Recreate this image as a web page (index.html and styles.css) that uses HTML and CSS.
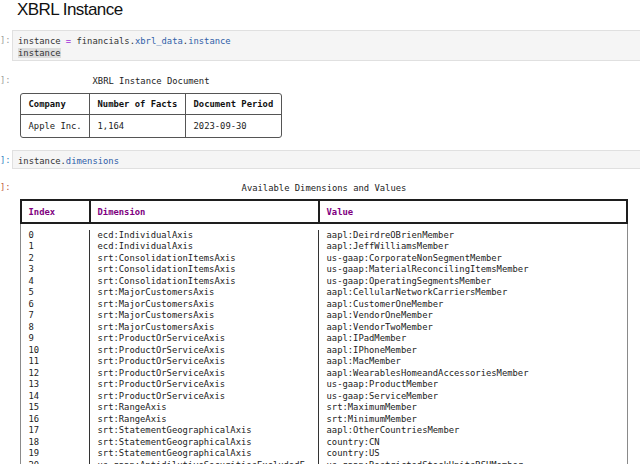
FILE: index.html
```html
<!DOCTYPE html>
<html>
<head>
<meta charset="utf-8">
<link rel="stylesheet" href="styles.css">
</head>
<body>
<h1 class="title">XBRL Instance</h1>

<div class="cell in-cell first">
  <div class="prompt dim">]:</div>
  <div class="code">
    <div class="line">instance <span class="op">=</span> financials.<span class="prop">xbrl_data</span>.<span class="prop">instance</span></div>
    <div class="line"><span class="sel">instance</span></div>
  </div>
</div>

<div class="cell out-cell out1">
  <div class="prompt dim">]:</div>
  <div class="out">
    <div class="rt rt1">
      <div class="caption">XBRL Instance Document</div>
      <div class="tbl1">
        <div class="c h">Company</div>
        <div class="c h b">Number of Facts</div>
        <div class="c h b">Document Period</div>
        <div class="c">Apple Inc.</div>
        <div class="c b">1,164</div>
        <div class="c b">2023-09-30</div>
      </div>
    </div>
  </div>
</div>

<div class="cell in-cell second">
  <div class="prompt blue">]:</div>
  <div class="code">
    <div class="line">instance.<span class="prop">dimensions</span></div>
  </div>
</div>

<div class="cell out-cell out2">
  <div class="prompt red">]:</div>
  <div class="out">
    <div class="rt rt2">
      <div class="caption">Available Dimensions and Values</div>
      <div class="thead">
        <div class="hc">Index</div>
        <div class="hc hb">Dimension</div>
        <div class="hc hb">Value</div>
      </div>
      <div class="tbody">
        <div class="bc">0</div><div class="bc bb">ecd:IndividualAxis</div><div class="bc bb">aapl:DeirdreOBrienMember</div>
        <div class="bc">1</div><div class="bc bb">ecd:IndividualAxis</div><div class="bc bb">aapl:JeffWilliamsMember</div>
        <div class="bc">2</div><div class="bc bb">srt:ConsolidationItemsAxis</div><div class="bc bb">us-gaap:CorporateNonSegmentMember</div>
        <div class="bc">3</div><div class="bc bb">srt:ConsolidationItemsAxis</div><div class="bc bb">us-gaap:MaterialReconcilingItemsMember</div>
        <div class="bc">4</div><div class="bc bb">srt:ConsolidationItemsAxis</div><div class="bc bb">us-gaap:OperatingSegmentsMember</div>
        <div class="bc">5</div><div class="bc bb">srt:MajorCustomersAxis</div><div class="bc bb">aapl:CellularNetworkCarriersMember</div>
        <div class="bc">6</div><div class="bc bb">srt:MajorCustomersAxis</div><div class="bc bb">aapl:CustomerOneMember</div>
        <div class="bc">7</div><div class="bc bb">srt:MajorCustomersAxis</div><div class="bc bb">aapl:VendorOneMember</div>
        <div class="bc">8</div><div class="bc bb">srt:MajorCustomersAxis</div><div class="bc bb">aapl:VendorTwoMember</div>
        <div class="bc">9</div><div class="bc bb">srt:ProductOrServiceAxis</div><div class="bc bb">aapl:IPadMember</div>
        <div class="bc">10</div><div class="bc bb">srt:ProductOrServiceAxis</div><div class="bc bb">aapl:IPhoneMember</div>
        <div class="bc">11</div><div class="bc bb">srt:ProductOrServiceAxis</div><div class="bc bb">aapl:MacMember</div>
        <div class="bc">12</div><div class="bc bb">srt:ProductOrServiceAxis</div><div class="bc bb">aapl:WearablesHomeandAccessoriesMember</div>
        <div class="bc">13</div><div class="bc bb">srt:ProductOrServiceAxis</div><div class="bc bb">us-gaap:ProductMember</div>
        <div class="bc">14</div><div class="bc bb">srt:ProductOrServiceAxis</div><div class="bc bb">us-gaap:ServiceMember</div>
        <div class="bc">15</div><div class="bc bb">srt:RangeAxis</div><div class="bc bb">srt:MaximumMember</div>
        <div class="bc">16</div><div class="bc bb">srt:RangeAxis</div><div class="bc bb">srt:MinimumMember</div>
        <div class="bc">17</div><div class="bc bb">srt:StatementGeographicalAxis</div><div class="bc bb">aapl:OtherCountriesMember</div>
        <div class="bc">18</div><div class="bc bb">srt:StatementGeographicalAxis</div><div class="bc bb">country:CN</div>
        <div class="bc">19</div><div class="bc bb">srt:StatementGeographicalAxis</div><div class="bc bb">country:US</div>
        <div class="bc">20</div><div class="bc bb">us-gaap:AntidilutiveSecuritiesExcludedF</div><div class="bc bb">us-gaap:RestrictedStockUnitsRSUMember</div>
        <div class="bc"></div><div class="bc bb">romComputationOfEarningsPerShareByAnti</div><div class="bc bb"></div>
      </div>
    </div>
  </div>
</div>
</body>
</html>
```
FILE: styles.css
```css
html, body {
  margin: 0;
  padding: 0;
  background: #ffffff;
}
body {
  width: 640px;
  overflow: hidden;
  font-family: "DejaVu Sans Mono", "Liberation Mono", monospace;
  font-size: 8.84px;
  color: #222;
}
.title {
  margin: 0 0 10px 0;
  padding-left: 17px;
  font-family: "Liberation Sans", Arial, sans-serif;
  font-weight: normal;
  font-size: 17px;
  line-height: 20px;
  letter-spacing: -0.55px;
  color: #111;
}
.cell {
  display: flex;
  align-items: flex-start;
}
.prompt {
  width: 12px;
  flex: none;
  line-height: 12px;
  white-space: pre;
}
.dim { color: #9a9a9a; }
.blue { color: #307fc1; }
.red { color: #bf5b3d; }

.in-cell .prompt { padding-top: 4px; }
.code {
  flex: 1;
  background: #f5f5f5;
  border: 1px solid #e0e0e0;
  border-right: none;
  padding: 4px 0 1px 5px;
  color: #333;
}
.line {
  line-height: 12px;
  height: 12px;
  white-space: pre;
}
.op { color: #a02fd8; }
.prop { color: #305ea8; }
.sel { background: #dcdcdc; }

.out1 { margin-top: 13.25px; }
.out2 { margin-top: 13.25px; }
.second { margin-top: 11.75px; }
.out-cell .prompt { line-height: 11.5px; padding-top: 0.5px; }
.out {
  flex: 1;
  padding-top: 1.5px;
  padding-left: 8px;
}
.rt {
  display: flex;
  flex-direction: column;
  align-items: flex-start;
}
.caption {
  line-height: 11.5px;
  height: 11.5px;
  align-self: stretch;
  text-align: center;
  white-space: pre;
}
.rt1 { width: 262px; }
.rt2 { width: 608px; }

.tbl1 {
  margin-top: 5.5px;
  display: grid;
  grid-template-columns: 68px 96px 96px;
  grid-template-rows: 21px 22px;
  border: 1px solid #555;
  border-radius: 3px;
}
.tbl1 .c {
  padding-left: 7.5px;
  padding-top: 1px;
  display: flex;
  align-items: center;
  white-space: pre;
}
.tbl1 .b { border-left: 1px solid #555; }
.tbl1 .h {
  font-weight: bold;
  color: #111;
  border-bottom: 1px solid #555;
}

.thead {
  margin-top: 4.5px;
  width: 608px;
  box-sizing: border-box;
  display: grid;
  grid-template-columns: 67px 229px 308px;
  height: 25px;
  border: 2px solid #1e1e1e;
}
.hc {
  padding-left: 6.5px;
  display: flex;
  align-items: center;
  color: #800080;
  font-weight: bold;
  white-space: pre;
}
.hb { border-left: 2px solid #1e1e1e; }

.tbody {
  width: 608px;
  box-sizing: border-box;
  display: grid;
  grid-template-columns: 68px 229px 309px;
  grid-auto-rows: 11.5px;
  padding-top: 5.5px;
  border-left: 1px solid #8a8a8a;
  border-right: 1px solid #8a8a8a;
}
.bc {
  padding-left: 7.5px;
  line-height: 11.5px;
  white-space: pre;
  overflow: hidden;
}
.bb { border-left: 1px solid #333; }
```
